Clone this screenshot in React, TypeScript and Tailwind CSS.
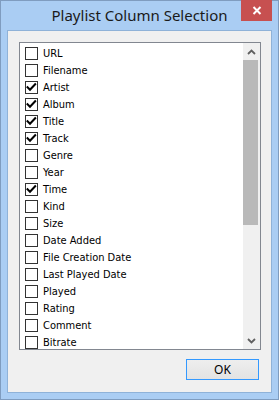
import React from "react";

const items: [string, boolean][] = [
  ["URL", false],
  ["Filename", false],
  ["Artist", true],
  ["Album", true],
  ["Title", true],
  ["Track", true],
  ["Genre", false],
  ["Year", false],
  ["Time", true],
  ["Kind", false],
  ["Size", false],
  ["Date Added", false],
  ["File Creation Date", false],
  ["Last Played Date", false],
  ["Played", false],
  ["Rating", false],
  ["Comment", false],
  ["Bitrate", false],
];

function Box({ checked }: { checked: boolean }) {
  return (
    <div className="w-[13px] h-[13px] border border-[#333333] bg-white shrink-0 relative">
      {checked && (
        <svg width="11" height="11" viewBox="0 0 11 11" className="absolute left-0 top-0">
          <path d="M1.5 5.2 L4 7.8 L9.2 2.2" fill="none" stroke="#000" strokeWidth="2" strokeLinecap="square" />
        </svg>
      )}
    </div>
  );
}

export default function App() {
  return (
    <div
      className="w-[279px] h-[400px] bg-[#aacdf3] border border-[#7f9cbf] flex flex-col"
      style={{ fontFamily: '"DejaVu Sans Condensed", "DejaVu Sans", sans-serif' }}
    >
      <div className="h-[29px] shrink-0 relative flex items-center justify-center">
        <span
          className="text-[15px] text-[#1a1a1a] leading-none"
          style={{ fontFamily: '"Noto Sans", sans-serif' }}
        >
          Playlist Column Selection
        </span>
        <div className="absolute right-[6px] top-[-1px] w-[31px] h-[21px] bg-[#c75050] flex items-center justify-center">
          <svg width="10" height="9" viewBox="0 0 10 9">
            <path d="M1.5 1 L8.5 8 M8.5 1 L1.5 8" stroke="#fff" strokeWidth="2" />
          </svg>
        </div>
      </div>
      <div className="mx-[6px] mb-[6px] flex-1 border border-[#8fb2d8] bg-[#f0f0f0] flex flex-col pl-[11px] pr-[10px] pt-[11px]">
        <div className="w-[242px] h-[308px] border border-[#828790] bg-white flex">
          <div className="flex-1 pt-[2px] pl-[5px] flex flex-col">
            {items.map(([label, checked]) => (
              <div key={label} className="h-[17px] flex items-center gap-[5px] shrink-0">
                <Box checked={checked} />
                <span className="text-[11px] text-black leading-none">{label}</span>
              </div>
            ))}
          </div>
          <div className="w-[17px] bg-[#f0f0f0] flex flex-col">
            <div className="h-[17px] flex items-center justify-center shrink-0">
              <svg width="9" height="6" viewBox="0 0 9 6">
                <path d="M1 5 L4.5 1.5 L8 5" fill="none" stroke="#606060" strokeWidth="1.8" />
              </svg>
            </div>
            <div className="h-[165px] mr-[2px] bg-[#b9b9b9] shrink-0" />
            <div className="flex-1" />
            <div className="h-[17px] flex items-center justify-center shrink-0">
              <svg width="9" height="6" viewBox="0 0 9 6">
                <path d="M1 1 L4.5 4.5 L8 1" fill="none" stroke="#606060" strokeWidth="1.8" />
              </svg>
            </div>
          </div>
        </div>
        <div className="flex justify-end mt-[9px] pr-[2px]">
          <div
            className="w-[73px] h-[21px] border border-[#3399ff] bg-gradient-to-b from-[#eeeeee] to-[#e3e3e3] flex items-center justify-center text-[12px] text-black"
            style={{ fontFamily: '"Noto Sans", sans-serif' }}
          >
            OK
          </div>
        </div>
      </div>
    </div>
  );
}
